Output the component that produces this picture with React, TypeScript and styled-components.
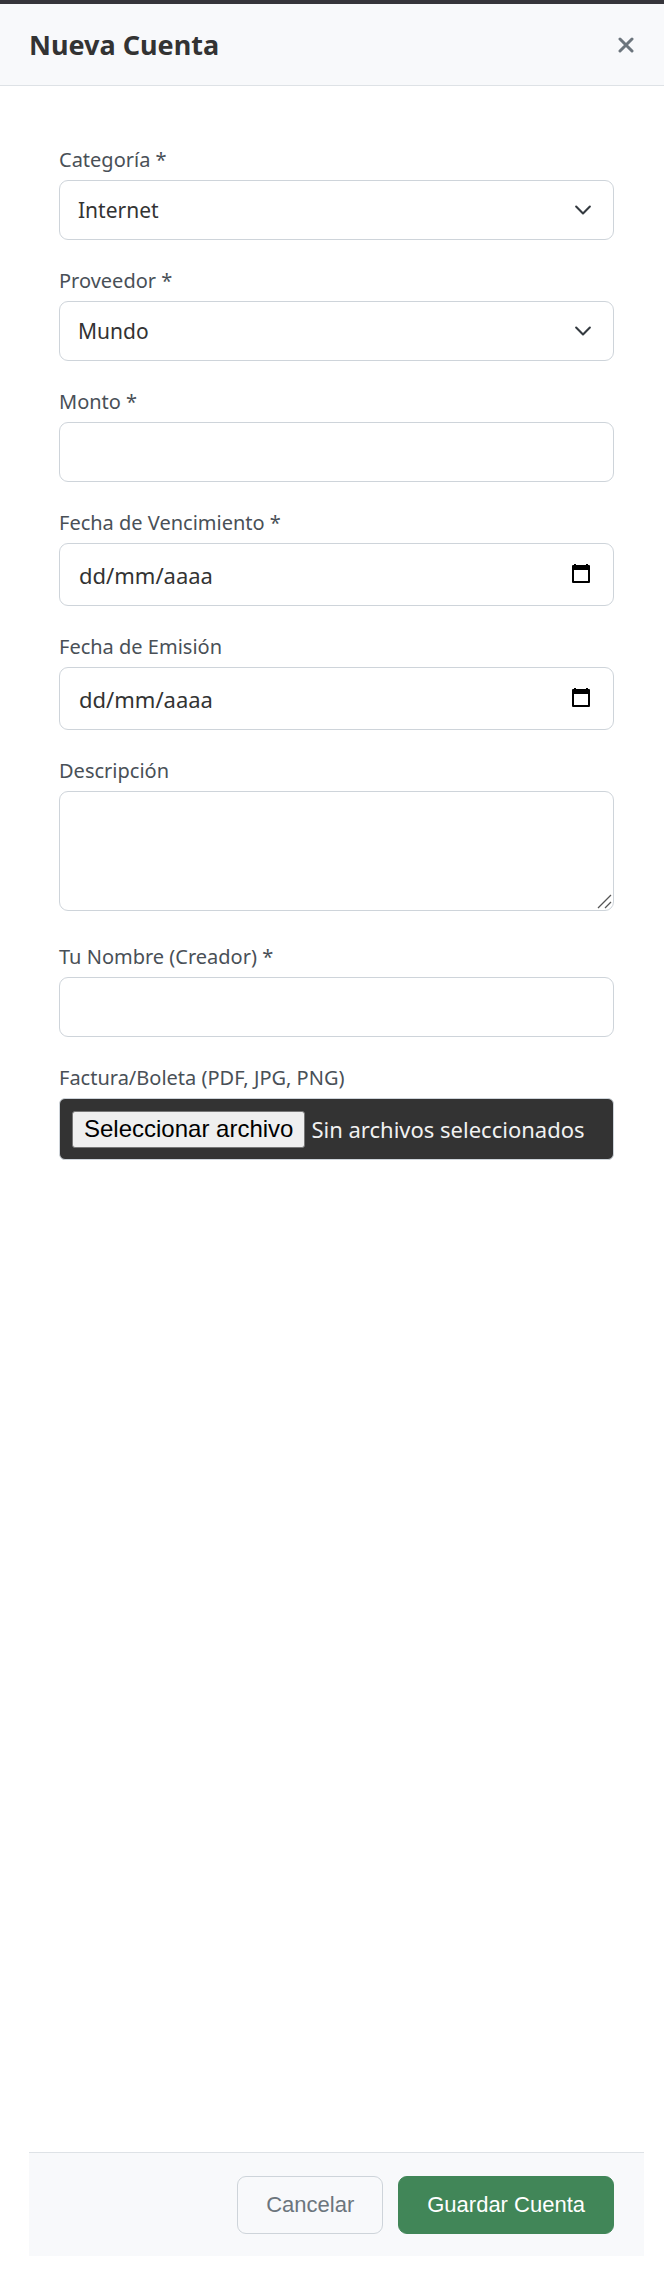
import React, { useRef, useState } from "react";
import styled, { createGlobalStyle, css } from "styled-components";

const GlobalStyle = createGlobalStyle`
  *, *::before, *::after { box-sizing: border-box; }
  body {
    margin: 0;
    background: #ffffff;
    color: #333333;
    font-family: Tahoma, "Noto Sans", sans-serif;
  }
`;

const Panel = styled.main`
  min-height: 100vh;
  display: flex;
  flex-direction: column;
  border-top: 4px solid #36353b;
`;

const Header = styled.header`
  display: flex;
  align-items: center;
  justify-content: space-between;
  height: 82px;
  padding: 0 24px 0 29px;
  background: #f8f9fb;
  border-bottom: 1px solid #dee2e6;
`;

const Title = styled.h1`
  margin: 0;
  font-size: 27px;
  line-height: 32px;
  font-weight: 700;
`;

const IconButton = styled.button`
  display: flex;
  padding: 6px;
  border: 0;
  background: none;
  color: #6c757d;
  cursor: pointer;
`;

const Form = styled.form`
  flex: 1;
  display: flex;
  flex-direction: column;
  padding: 29px 20px 24px 29px;
`;

const Fields = styled.div`
  display: flex;
  flex-direction: column;
  gap: 26px;
  padding: 30px;
`;

const Field = styled.div`
  display: flex;
  flex-direction: column;
  gap: 5px;
`;

const Label = styled.label`
  font-size: 20px;
  line-height: 30px;
  color: #495057;
`;

const controlBox = css`
  width: 100%;
  border: 1px solid #ced4da;
  border-radius: 9px;
  background: #ffffff;
  color: #333333;
  font-family: inherit;
  font-size: 22px;
  line-height: 30px;
`;

const Control = styled.div`
  position: relative;
`;

const TextInput = styled.input`
  ${controlBox}
  display: block;
  height: 60px;
  padding: 0 18px;
`;

const DateInput = styled(TextInput)`
  height: 63px;
  padding: 0 60px 0 19px;
  &::placeholder { color: #333333; opacity: 1; }
`;

const Select = styled.select`
  ${controlBox}
  display: block;
  height: 60px;
  padding: 0 60px 0 18px;
  font-size: 21px;
  appearance: none;
`;

const TextArea = styled.textarea`
  ${controlBox}
  display: block;
  height: 120px;
  padding: 14px 18px;
  resize: vertical;
  &::-webkit-resizer { display: none; }
`;

const TextAreaControl = styled.div`
  padding-bottom: 5px;
`;

const TextAreaFrame = styled.div`
  position: relative;
`;

const Chevron = styled.svg`
  position: absolute;
  top: 19px;
  right: 20px;
  pointer-events: none;
`;

const Grip = styled.svg`
  position: absolute;
  right: 2px;
  bottom: 2px;
  pointer-events: none;
`;

const CalendarButton = styled(IconButton)`
  position: absolute;
  top: 14px;
  right: 16px;
  color: #000000;
`;

const FileBox = styled.div`
  display: flex;
  align-items: center;
  gap: 6px;
  height: 62px;
  padding: 0 12px;
  border: 1px solid #ced4da;
  border-radius: 6px;
  background: #333333;
  color: #f1f1f1;
  font-size: 22px;
  line-height: 30px;
  white-space: nowrap;
`;

const FileButton = styled.button`
  height: 37px;
  padding: 0 11px;
  border: 1px solid #767676;
  border-radius: 3px;
  background: #efefef;
  color: #000000;
  font-family: Arial, "Liberation Sans", sans-serif;
  font-size: 24px;
`;

const Footer = styled.footer`
  display: flex;
  justify-content: flex-end;
  gap: 15px;
  margin-top: auto;
  padding: 23px 30px 22px;
  border-top: 1px solid #dee2e6;
  background: #f8f9fb;
`;

const Button = styled.button<{ $primary?: boolean }>`
  height: 58px;
  padding: 0 28px;
  border: 1px solid ${(p) => (p.$primary ? "#418658" : "#ced4da")};
  border-radius: 9px;
  background: ${(p) => (p.$primary ? "#418658" : "transparent")};
  color: ${(p) => (p.$primary ? "#ffffff" : "#6c757d")};
  font-family: Arial, "Liberation Sans", sans-serif;
  font-size: 22px;
  cursor: pointer;
`;

function ChevronIcon() {
  return (
    <Chevron width="22" height="22" viewBox="0 0 16 16" fill="none" stroke="#343a40" strokeWidth="1.5" strokeLinecap="round" strokeLinejoin="round" aria-hidden="true">
      <path d="M3 5.5l5 5 5-5" />
    </Chevron>
  );
}

function SelectField({ id, label, options }: { id: string; label: string; options: string[] }) {
  return (
    <Field>
      <Label htmlFor={id}>{label}</Label>
      <Control>
        <Select id={id} required>
          {options.map((o) => <option key={o}>{o}</option>)}
        </Select>
        <ChevronIcon />
      </Control>
    </Field>
  );
}

function DateField({ id, label, required }: { id: string; label: string; required?: boolean }) {
  return (
    <Field>
      <Label htmlFor={id}>{label}</Label>
      <Control>
        <DateInput id={id} type="text" inputMode="numeric" placeholder="dd/mm/aaaa" required={required} />
        <CalendarButton type="button" aria-label="Abrir calendario">
          <svg width="22" height="22" viewBox="0 0 22 22" fill="currentColor" aria-hidden="true">
            <path fillRule="evenodd" d="M4 1h2v1h10V1h2v1h1q1 0 1 1v16q0 1-1 1H3q-1 0-1-1V3q0-1 1-1h1zM4 7v11h14V7z" />
          </svg>
        </CalendarButton>
      </Control>
    </Field>
  );
}

export default function App() {
  const fileRef = useRef<HTMLInputElement>(null);
  const [fileName, setFileName] = useState("");

  return (
    <Panel>
      <GlobalStyle />
      <Header>
        <Title>Nueva Cuenta</Title>
        <IconButton type="button" aria-label="Cerrar">
          <svg width="16" height="16" viewBox="0 0 16 16" stroke="currentColor" strokeWidth="3" strokeLinecap="round" aria-hidden="true">
            <path d="M2 2l12 12M14 2L2 14" />
          </svg>
        </IconButton>
      </Header>
      <Form onSubmit={(e: React.FormEvent) => e.preventDefault()}>
        <Fields>
          <SelectField id="categoria" label="Categoría *" options={["Internet"]} />
          <SelectField id="proveedor" label="Proveedor *" options={["Mundo"]} />
          <Field>
            <Label htmlFor="monto">Monto *</Label>
            <TextInput id="monto" inputMode="decimal" required />
          </Field>
          <DateField id="vencimiento" label="Fecha de Vencimiento *" required />
          <DateField id="emision" label="Fecha de Emisión" />
          <Field>
            <Label htmlFor="descripcion">Descripción</Label>
            <TextAreaControl>
              <TextAreaFrame>
                <TextArea id="descripcion" />
                <Grip width="15" height="15" viewBox="0 0 15 15" stroke="#555555" strokeWidth="1.3" aria-hidden="true">
                  <path d="M1 14L14 1M8 14l6-6" />
                </Grip>
              </TextAreaFrame>
            </TextAreaControl>
          </Field>
          <Field>
            <Label htmlFor="creador">Tu Nombre (Creador) *</Label>
            <TextInput id="creador" required />
          </Field>
          <Field>
            <Label htmlFor="factura">Factura/Boleta (PDF, JPG, PNG)</Label>
            <FileBox>
              <input
                ref={fileRef}
                id="factura"
                type="file"
                accept=".pdf,.jpg,.png"
                hidden
                onChange={(e) => setFileName(e.target.files?.[0]?.name ?? "")}
              />
              <FileButton type="button" onClick={() => fileRef.current?.click()}>Seleccionar archivo</FileButton>
              <span>{fileName || "Sin archivos seleccionados"}</span>
            </FileBox>
          </Field>
        </Fields>
        <Footer>
          <Button type="button">Cancelar</Button>
          <Button type="submit" $primary>Guardar Cuenta</Button>
        </Footer>
      </Form>
    </Panel>
  );
}
